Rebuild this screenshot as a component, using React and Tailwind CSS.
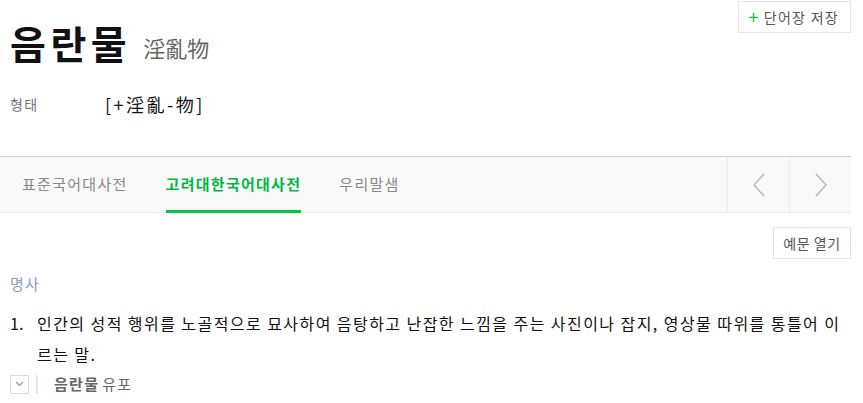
import React from 'react'

const font = { fontFamily: '"Noto Sans CJK KR", "Noto Sans", sans-serif' }

function Chevron({ dir }) {
    return (
        <svg width="14" height="24" viewBox="0 0 14 24" fill="none" stroke="#b5b5b5" strokeWidth="1.3">
            {dir === 'left' ? <path d="M12 1 L2 12 L12 23" /> : <path d="M2 1 L12 12 L2 23" />}
        </svg>
    )
}

export default function App() {
    return (
        <div className="w-[851px] bg-white text-[#111] tracking-[0.08em]" style={font}>
            <div className="flex justify-between">
                <div className="flex items-end pl-[10px] pt-[17px]">
                    <h1 className="text-[39px] font-bold leading-[50px] tracking-[4.5px]">음란물</h1>
                    <span className="ml-[12px] mb-[5px] text-[22px] leading-[30px] text-[#666] tracking-normal">淫亂物</span>
                </div>
                <button className="mt-[1px] h-[32px] pl-[10px] pr-[11px] border border-[#e5e5e5] flex items-center gap-[4px] text-[14px] text-[#555]">
                    <span className="text-[#00c73c] text-[18px] leading-none -mt-[2px]">+</span>
                    단어장 저장
                </button>
            </div>

            <div className="flex items-center pl-[10px] mt-[25px] h-[24px]">
                <span className="w-[95px] text-[14px] text-[#777]">형태</span>
                <span className="text-[18px] text-[#111] tracking-[2.5px]">[+淫亂-物]</span>
            </div>

            <div className="mt-[40px] border-t border-[#cfcfcf] border-b border-b-[#ececec] bg-[#f9f9f9] flex h-[57px]">
                <div className="flex flex-1 pl-[22px] gap-[38px] text-[15px]">
                    <div className="flex items-center text-[#888]">표준국어대사전</div>
                    <div className="flex items-center text-[#00b843] font-bold relative">
                        고려대한국어대사전
                        <div className="absolute left-0 right-0 bottom-[-1px] h-[3px] bg-[#00c73c]" />
                    </div>
                    <div className="flex items-center text-[#888]">우리말샘</div>
                </div>
                <div className="w-[62px] border-l border-[#ececec] flex items-center justify-center">
                    <Chevron dir="left" />
                </div>
                <div className="w-[62px] border-l border-[#ececec] flex items-center justify-center">
                    <Chevron dir="right" />
                </div>
            </div>

            <div className="flex justify-end mt-[14px]">
                <button className="h-[32px] w-[78px] border border-[#e2e2e2] text-[14px] text-[#555] tracking-[0.04em]">예문 열기</button>
            </div>

            <div className="pl-[10px] mt-[13px] text-[15px] leading-[24px] text-[#8a9bbb]">명사</div>

            <div className="flex mt-[12px] text-[16px] leading-[31px] text-[#111]">
                <span className="w-[37px] pl-[10px] shrink-0 tracking-normal">1.</span>
                <p className="pr-[6px] tracking-[0.09em]">인간의 성적 행위를 노골적으로 묘사하여 음탕하고 난잡한 느낌을 주는 사진이나 잡지, 영상물 따위를 통틀어 이르는 말.</p>
            </div>

            <div className="flex items-center pl-[10px] mt-[4px] h-[20px]">
                <div className="w-[19px] h-[19px] border border-[#dcdcdc] flex items-center justify-center">
                    <svg width="9" height="6" viewBox="0 0 9 6" fill="none" stroke="#8a9bbb" strokeWidth="1.2">
                        <path d="M1 1 L4.5 4.5 L8 1" />
                    </svg>
                </div>
                <div className="ml-[7px] w-[2px] h-[19px] bg-[#e6e6e6]" />
                <span className="ml-[16px] text-[15px] font-bold text-[#666]">음란물</span>
                <span className="ml-[3px] text-[15px] text-[#666]">유포</span>
            </div>
        </div>
    )
}
